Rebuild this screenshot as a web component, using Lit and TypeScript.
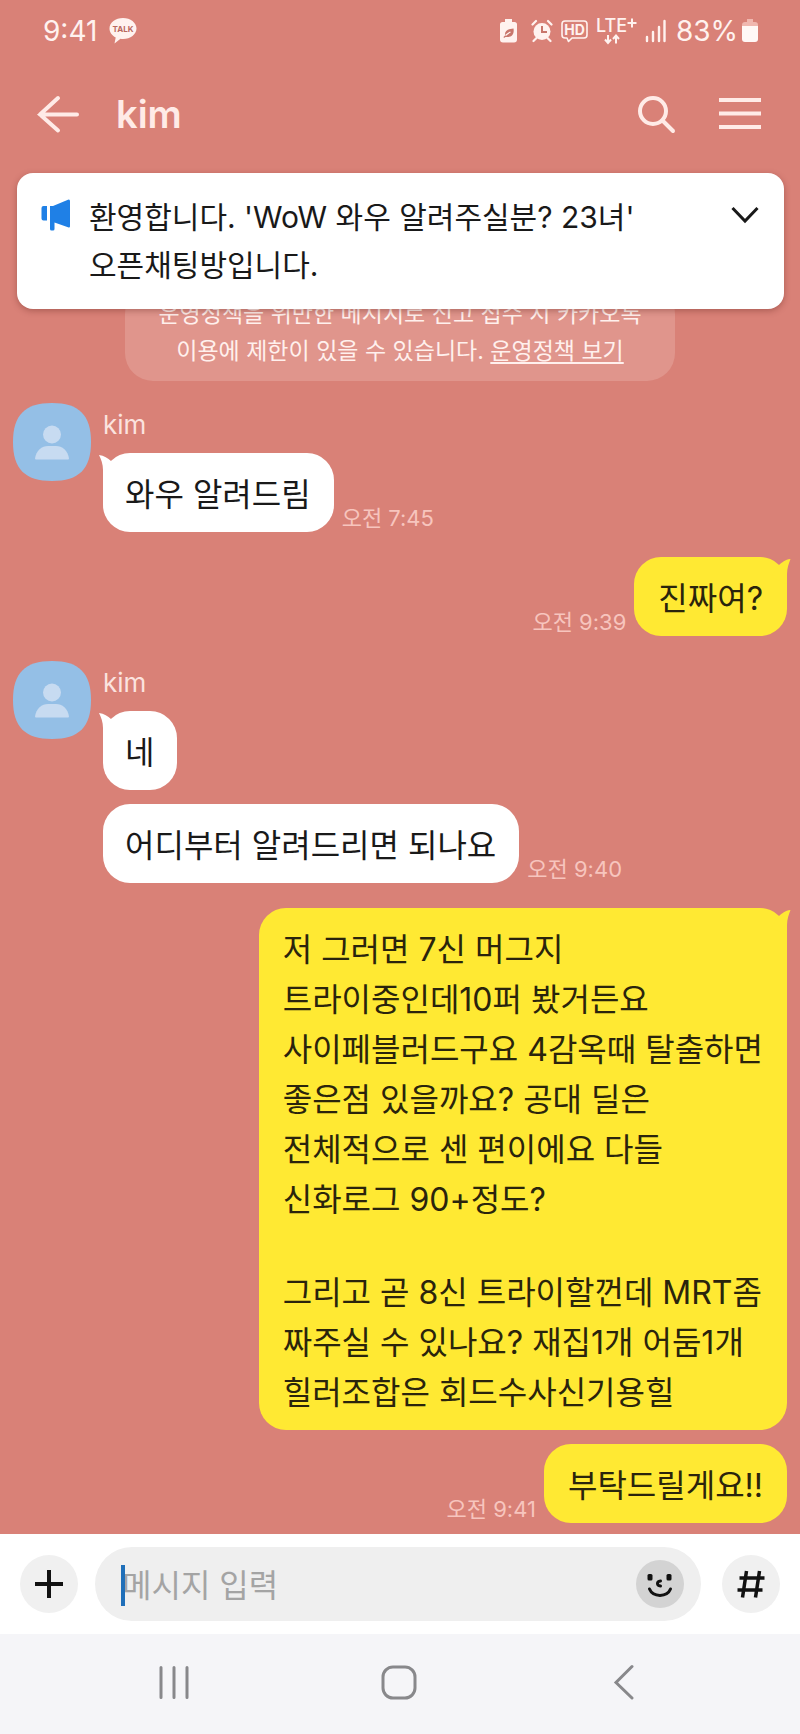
import { LitElement, html, css, svg, nothing } from "lit";
import { customElement, property } from "lit/decorators.js";

interface Message {
  text: string[];
  time?: string;
}

interface Group {
  from: "me" | "them";
  name?: string;
  messages: Message[];
}

const GROUPS: Group[] = [
  { from: "them", name: "kim", messages: [{ text: ["와우 알려드림"], time: "오전 7:45" }] },
  { from: "me", messages: [{ text: ["진짜여?"], time: "오전 9:39" }] },
  {
    from: "them",
    name: "kim",
    messages: [{ text: ["네"] }, { text: ["어디부터 알려드리면 되나요"], time: "오전 9:40" }],
  },
  {
    from: "me",
    messages: [
      {
        text: [
          "저 그러면 7신 머그지\n트라이중인데10퍼 봤거든요\n사이페블러드구요 4감옥때 탈출하면\n좋은점 있을까요? 공대 딜은\n전체적으로 센 편이에요 다들\n신화로그 90+정도?",
          "그리고 곧 8신 트라이할껀데 MRT좀\n짜주실 수 있나요? 재집1개 어둠1개\n힐러조합은 회드수사신기용힐",
        ],
      },
      { text: ["부탁드릴게요!!"], time: "오전 9:41" },
    ],
  },
];

@customElement("status-bar")
class StatusBar extends LitElement {
  static styles = css`
    :host {
      display: flex;
      align-items: center;
      height: 62px;
      padding: 0 42px 0 43px;
      box-sizing: border-box;
      color: #fff2ef;
      font-size: 28px;
      line-height: 40px;
    }
    svg {
      display: block;
      flex: none;
    }
    .talk {
      margin-left: 12px;
    }
    .right {
      display: flex;
      align-items: center;
      margin-left: auto;
    }
    .icons {
      display: flex;
      align-items: center;
      gap: 8px;
      margin-right: 10px;
    }
    .battery {
      margin-left: 4px;
    }
  `;

  render() {
    return html`
      <span>9:41</span>
      <svg class="talk" width="28" height="28" viewBox="0 0 28 28" role="img" aria-label="TALK">
        <path
          fill="#fff2ef"
          d="M14 1C6.500 1 .5 5.600 .5 11.500c0 3.800 2.500 7.100 6.200 9L5.500 26.500l6-4.700c.8.1 1.600.2 2.500.2 7.500 0 13.500-4.700 13.500-10.500S21.500 1 14 1z"
        />
        <text x="14" y="15" text-anchor="middle" font-size="8" font-weight="700" fill="#b9695f">TALK</text>
      </svg>
      <div class="right">
        <div class="icons">
          <svg width="24" height="26" viewBox="0 0 24 26" aria-hidden="true">
            <path fill="#fff2ef" d="M6 1h7v3h2.500a2.500 2.500 0 0 1 2.500 2.500v15a3 3 0 0 1-3 3H4a3 3 0 0 1-3-3v-15A2.500 2.500 0 0 1 3.500 4H6z" />
            <path fill="#c8766c" d="M14.500 10.500c1 6-2 9-8 8.500l-1.500 1-.5-1 1.500-1.500c-.5-4.500 2.500-6.500 8.500-7z" />
            <path fill="none" stroke="#fff2ef" stroke-width="1.200" d="M6.500 17.500c1.500-1.500 3-2.500 5-3.500" />
          </svg>
          <svg width="22" height="24" viewBox="0 0 22 24" aria-hidden="true">
            <circle cx="11" cy="12.500" r="8.500" fill="#fff2ef" />
            <path
              fill="none"
              stroke="#fff2ef"
              stroke-width="2.200"
              stroke-linecap="round"
              d="M1.500 5.500L5 2M20.500 5.500L17 2M5.500 19l-3 3M16.500 19l3 3"
            />
            <path fill="none" stroke="#c8766c" stroke-width="2" d="M11 7v6h5" />
          </svg>
          <svg width="27" height="24" viewBox="0 0 27 24" role="img" aria-label="HD">
            <path
              fill="none"
              stroke="#fff2ef"
              stroke-width="1.600"
              stroke-linejoin="round"
              d="M4 2h19a3 3 0 0 1 3 3v11a3 3 0 0 1-3 3H11l-3.500 3.500L6 19H4a3 3 0 0 1-3-3V5a3 3 0 0 1 3-3z"
            />
            <text x="13.500" y="15.500" text-anchor="middle" font-size="14" font-weight="700" fill="#fff2ef">HD</text>
          </svg>
          <svg width="41" height="35" viewBox="0 -4 41 35" role="img" aria-label="LTE+">
            <text x="0" y="14" font-size="18" font-weight="500" fill="#fff2ef">LTE</text>
            <path
              fill="none"
              stroke="#fff2ef"
              stroke-width="2"
              d="M36 .5v9M31.500 5h9M12 17v7.500M9 21.500l3 3.500 3-3.500M20 25.500V18M17 21l3-3.500 3 3.500"
            />
          </svg>
          <svg width="21" height="24" viewBox="0 0 21 24" aria-hidden="true">
            <path stroke="#fff2ef" stroke-width="2.400" stroke-linecap="round" d="M2 18v4M8 13v9M14 8v14M19.500 2v20" />
          </svg>
        </div>
        <span>83%</span>
        <svg class="battery" width="16" height="24" viewBox="0 0 16 24" aria-hidden="true">
          <path fill="#f0b7af" d="M5 0h6v3h2a3 3 0 0 1 3 3v3H0V6a3 3 0 0 1 3-3h2z" />
          <path fill="#fff8f6" d="M0 7h16v13a3 3 0 0 1-3 3H3a3 3 0 0 1-3-3z" />
        </svg>
      </div>
    `;
  }
}

@customElement("chat-header")
class ChatHeader extends LitElement {
  static styles = css`
    :host {
      display: flex;
      align-items: center;
      height: 110px;
      padding: 0 38px 6px 36px;
      box-sizing: border-box;
      color: #ffebe7;
    }
    h1 {
      flex: 1;
      margin: 0 0 0 36px;
      font-size: 38px;
      line-height: 48px;
      font-weight: 600;
    }
    button {
      display: block;
      padding: 0;
      border: 0;
      background: none;
      color: inherit;
    }
    .search {
      margin-right: 42px;
    }
    svg {
      display: block;
    }
  `;

  render() {
    return html`
      <button aria-label="뒤로">
        <svg width="44" height="40" viewBox="0 0 44 40" fill="none" stroke="currentColor" stroke-width="4" stroke-linecap="round">
          <path d="M22 4L4 20.500l18 16M4 20.500h37" />
        </svg>
      </button>
      <h1>kim</h1>
      <button class="search" aria-label="검색">
        <svg width="40" height="40" viewBox="0 0 40 40" fill="none" stroke="currentColor" stroke-width="4" stroke-linecap="round">
          <circle cx="17" cy="17" r="13" />
          <path d="M27 27l10 10" />
        </svg>
      </button>
      <button aria-label="메뉴">
        <svg width="44" height="40" viewBox="0 0 44 40" stroke="currentColor" stroke-width="4">
          <path d="M1 6h42M1 19.500h42M1 33h42" />
        </svg>
      </button>
    `;
  }
}

@customElement("chat-notice")
class ChatNotice extends LitElement {
  static styles = css`
    :host {
      display: flex;
      align-items: flex-start;
      padding: 20px 24px;
      border-radius: 16px;
      background: #fff;
      color: #191919;
      box-shadow: 0 2px 6px rgba(90, 30, 24, 0.35);
    }
    p {
      flex: 1;
      margin: 0 12px 0 18px;
      font-size: 30px;
      line-height: 48px;
      word-break: keep-all;
      white-space: pre-line;
    }
    button {
      padding: 10px 0;
      border: 0;
      background: none;
      color: inherit;
    }
    svg {
      display: block;
    }
    .horn {
      flex: none;
      margin-top: 6px;
    }
  `;

  render() {
    return html`
      <svg class="horn" width="30" height="34" viewBox="0 0 30 34" fill="#1f80e6" aria-hidden="true">
        <path d="M2.500 7H6v14.500H2.500A2 2 0 0 1 .5 19.500V9a2 2 0 0 1 2-2z" />
        <path d="M9 7h3L27 .8Q29 0 29 2.200v25Q29 29 27 28.200L13.500 23.500V30a1.500 1.500 0 0 1-1.500 1.500h-1.500A1.500 1.500 0 0 1 9 30z" />
      </svg>
      <p>${"환영합니다. 'WoW 와우 알려주실분? 23녀'\n오픈채팅방입니다."}</p>
      <button aria-label="공지 펼치기">
        <svg width="30" height="24" viewBox="0 0 30 24" fill="none" stroke="currentColor" stroke-width="3">
          <path d="M2.500 5L15 18 27.500 5" />
        </svg>
      </button>
    `;
  }
}

@customElement("chat-group")
class ChatGroup extends LitElement {
  static styles = css`
    :host {
      display: block;
    }
    .group {
      display: flex;
      align-items: flex-start;
      gap: 12px;
    }
    .avatar {
      display: block;
      flex: none;
    }
    .stack {
      display: flex;
      flex: 1;
      flex-direction: column;
      gap: 14px;
    }
    .name {
      margin-bottom: -14px;
      height: 50px;
      color: #fbe3df;
      font-size: 26px;
      line-height: 44px;
    }
    .row {
      display: flex;
      align-items: flex-end;
      gap: 8px;
    }
    .me .row {
      flex-direction: row-reverse;
    }
    .bubble {
      position: relative;
      padding: 17px 23px 12px 22px;
      border-radius: 27px;
      background: #fff;
      color: #191919;
      font-size: 32px;
      line-height: 50px;
    }
    .me .bubble {
      padding: 17px 24px 12px 24px;
      background: #ffe933;
      color: #2a240c;
    }
    p {
      margin: 0;
      white-space: pre-line;
    }
    p + p {
      margin-top: 43px;
    }
    .tail {
      position: absolute;
      top: 0;
      left: -5px;
      fill: #fff;
    }
    .me .tail {
      right: -4px;
      left: auto;
      fill: #ffe933;
    }
    time {
      color: #f7c5be;
      font-size: 22px;
      line-height: 28px;
      white-space: nowrap;
    }
  `;

  @property({ attribute: false }) group!: Group;

  private tail() {
    const mine = this.group.from === "me";
    return html`<svg class="tail" width="25" height="27" viewBox="0 0 25 27" aria-hidden="true">
      ${mine
        ? svg`<path d="M24.500 2C19 2.500 16 5.500 13 8L5 20l16 7V17c0-6 2-11 3.500-15z" />`
        : svg`<path d="M1 2C6 2.500 10 5.500 13 8l7 12-15 7V17C5 11 3 6 1 2z" />`}
    </svg>`;
  }

  render() {
    const { from, name, messages } = this.group;
    return html`
      <div class="group ${from}">
        ${from === "them"
          ? html`<svg class="avatar" width="78" height="78" viewBox="0 0 78 78" aria-hidden="true">
              <path fill="#94bfe6" d="M39 0C66 0 78 12 78 39S66 78 39 78 0 66 0 39 12 0 39 0z" />
              <circle cx="39" cy="31.500" r="9" fill="#c7dbf1" />
              <path fill="#c7dbf1" d="M22 55.500C23 47.500 29 43 35 43h8c6 0 12 4.500 13 12.500a1 1 0 0 1-1 1H23a1 1 0 0 1-1-1z" />
            </svg>`
          : nothing}
        <div class="stack">
          ${name ? html`<div class="name">${name}</div>` : nothing}
          ${messages.map(
            (m, i) => html`
              <div class="row">
                <div class="bubble">${i === 0 ? this.tail() : nothing}${m.text.map((t) => html`<p>${t}</p>`)}</div>
                ${m.time ? html`<time>${m.time}</time>` : nothing}
              </div>
            `
          )}
        </div>
      </div>
    `;
  }
}

@customElement("chat-composer")
class ChatComposer extends LitElement {
  static styles = css`
    :host {
      display: flex;
      align-items: center;
      gap: 17px;
      padding: 13px 20px;
      background: #fff;
    }
    button {
      display: grid;
      place-items: center;
      flex: none;
      padding: 0;
      border: 0;
      border-radius: 50%;
      background: #f0f0f0;
      color: #111;
    }
    .round {
      width: 58px;
      height: 58px;
    }
    .field {
      position: relative;
      display: flex;
      flex: 1;
      align-items: center;
      height: 74px;
      margin-right: 4px;
      padding: 0 17px 0 27px;
      box-sizing: border-box;
      border-radius: 37px;
      background: #efefef;
    }
    input {
      flex: 1;
      min-width: 0;
      height: 50px;
      padding: 3px 0 0;
      border: 0;
      outline: 0;
      background: none;
      color: #191919;
      font: inherit;
      font-size: 32px;
    }
    input::placeholder {
      color: #a4a4a4;
      opacity: 1;
    }
    .caret {
      position: absolute;
      top: 18px;
      left: 26px;
      width: 4px;
      height: 41px;
      background: #1f6fb9;
    }
    .emoji {
      width: 48px;
      height: 48px;
      background: #d3d3d3;
    }
    svg {
      display: block;
    }
  `;

  render() {
    return html`
      <button class="round" aria-label="추가">
        <svg width="30" height="30" viewBox="0 0 30 30" stroke="currentColor" stroke-width="4"><path d="M15 1v28M1 15h28" /></svg>
      </button>
      <div class="field">
        <input type="text" placeholder="메시지 입력" aria-label="메시지 입력" />
        <span class="caret"></span>
        <button class="emoji" aria-label="이모티콘">
          <svg width="48" height="48" viewBox="0 0 48 48" fill="none" stroke="currentColor" stroke-linecap="round">
            <rect x="11.500" y="14" width="5" height="6.500" rx="1.500" fill="currentColor" stroke="none" />
            <rect x="30.500" y="14" width="5" height="6.500" rx="1.500" fill="currentColor" stroke="none" />
            <path stroke-width="3" d="M24.500 21c-4 .5-4 4.500 0 5" />
            <path stroke-width="3" d="M13.500 29c3.500 8.500 17.500 8.500 21 0" />
          </svg>
        </button>
      </div>
      <button class="round" aria-label="샵 검색">
        <svg width="30" height="30" viewBox="0 0 30 30" fill="none" stroke="currentColor" stroke-width="3.500">
          <path d="M10.500 2L6.500 28.500M23.500 2L19.500 28.500M3.500 9h25M1.500 21h25" />
        </svg>
      </button>
    `;
  }
}

@customElement("nav-bar")
class NavBar extends LitElement {
  static styles = css`
    :host {
      display: grid;
      grid-template-columns: repeat(3, 1fr);
      height: 100px;
      padding: 0 64px 4px 62px;
      box-sizing: border-box;
      background: #f5f5f8;
    }
    button {
      display: grid;
      place-items: center;
      padding: 0;
      border: 0;
      background: none;
      color: #88888b;
    }
    svg {
      fill: none;
      stroke: currentColor;
      stroke-width: 3;
      stroke-linecap: round;
    }
  `;

  render() {
    return html`
      <button aria-label="최근 앱">
        <svg width="34" height="36" viewBox="0 0 34 36"><path d="M4 3.500v30M17 3.500v30M30 3.500v30" /></svg>
      </button>
      <button aria-label="홈">
        <svg width="36" height="36" viewBox="0 0 36 36"><rect x="2" y="3" width="32" height="31" rx="10" /></svg>
      </button>
      <button aria-label="뒤로">
        <svg width="36" height="36" viewBox="0 0 36 36"><path d="M26 2.500L10 18.500l16 15.500" /></svg>
      </button>
    `;
  }
}

@customElement("app-root")
class AppRoot extends LitElement {
  static styles = css`
    :host {
      display: flex;
      flex-direction: column;
      min-height: 100vh;
      background: #d98177;
      font-family: Inter, "Noto Sans CJK KR", sans-serif;
    }
    main {
      position: relative;
      display: flex;
      flex: 1;
      flex-direction: column;
      justify-content: flex-end;
      gap: 25px;
      padding: 112px 13px 11px;
    }
    chat-notice {
      position: absolute;
      z-index: 1;
      top: 1px;
      right: 16px;
      left: 17px;
    }
    .policy {
      align-self: center;
      margin: 0 0 -3px;
      padding: 10px 33px 11px;
      border-radius: 28px;
      background: #e0958c;
      color: #fff0ed;
      font-size: 23px;
      line-height: 37px;
      text-align: center;
      white-space: pre-line;
    }
    .policy a {
      color: inherit;
      text-underline-offset: 3px;
    }
  `;

  render() {
    return html`
      <status-bar></status-bar>
      <chat-header></chat-header>
      <main>
        <chat-notice></chat-notice>
        <p class="policy">${"운영정책을 위반한 메시지로 신고 접수 시 카카오톡\n이용에 제한이 있을 수 있습니다. "}<a href="#policy">운영정책 보기</a></p>
        ${GROUPS.map((g) => html`<chat-group .group=${g}></chat-group>`)}
      </main>
      <chat-composer></chat-composer>
      <nav-bar></nav-bar>
    `;
  }
}
